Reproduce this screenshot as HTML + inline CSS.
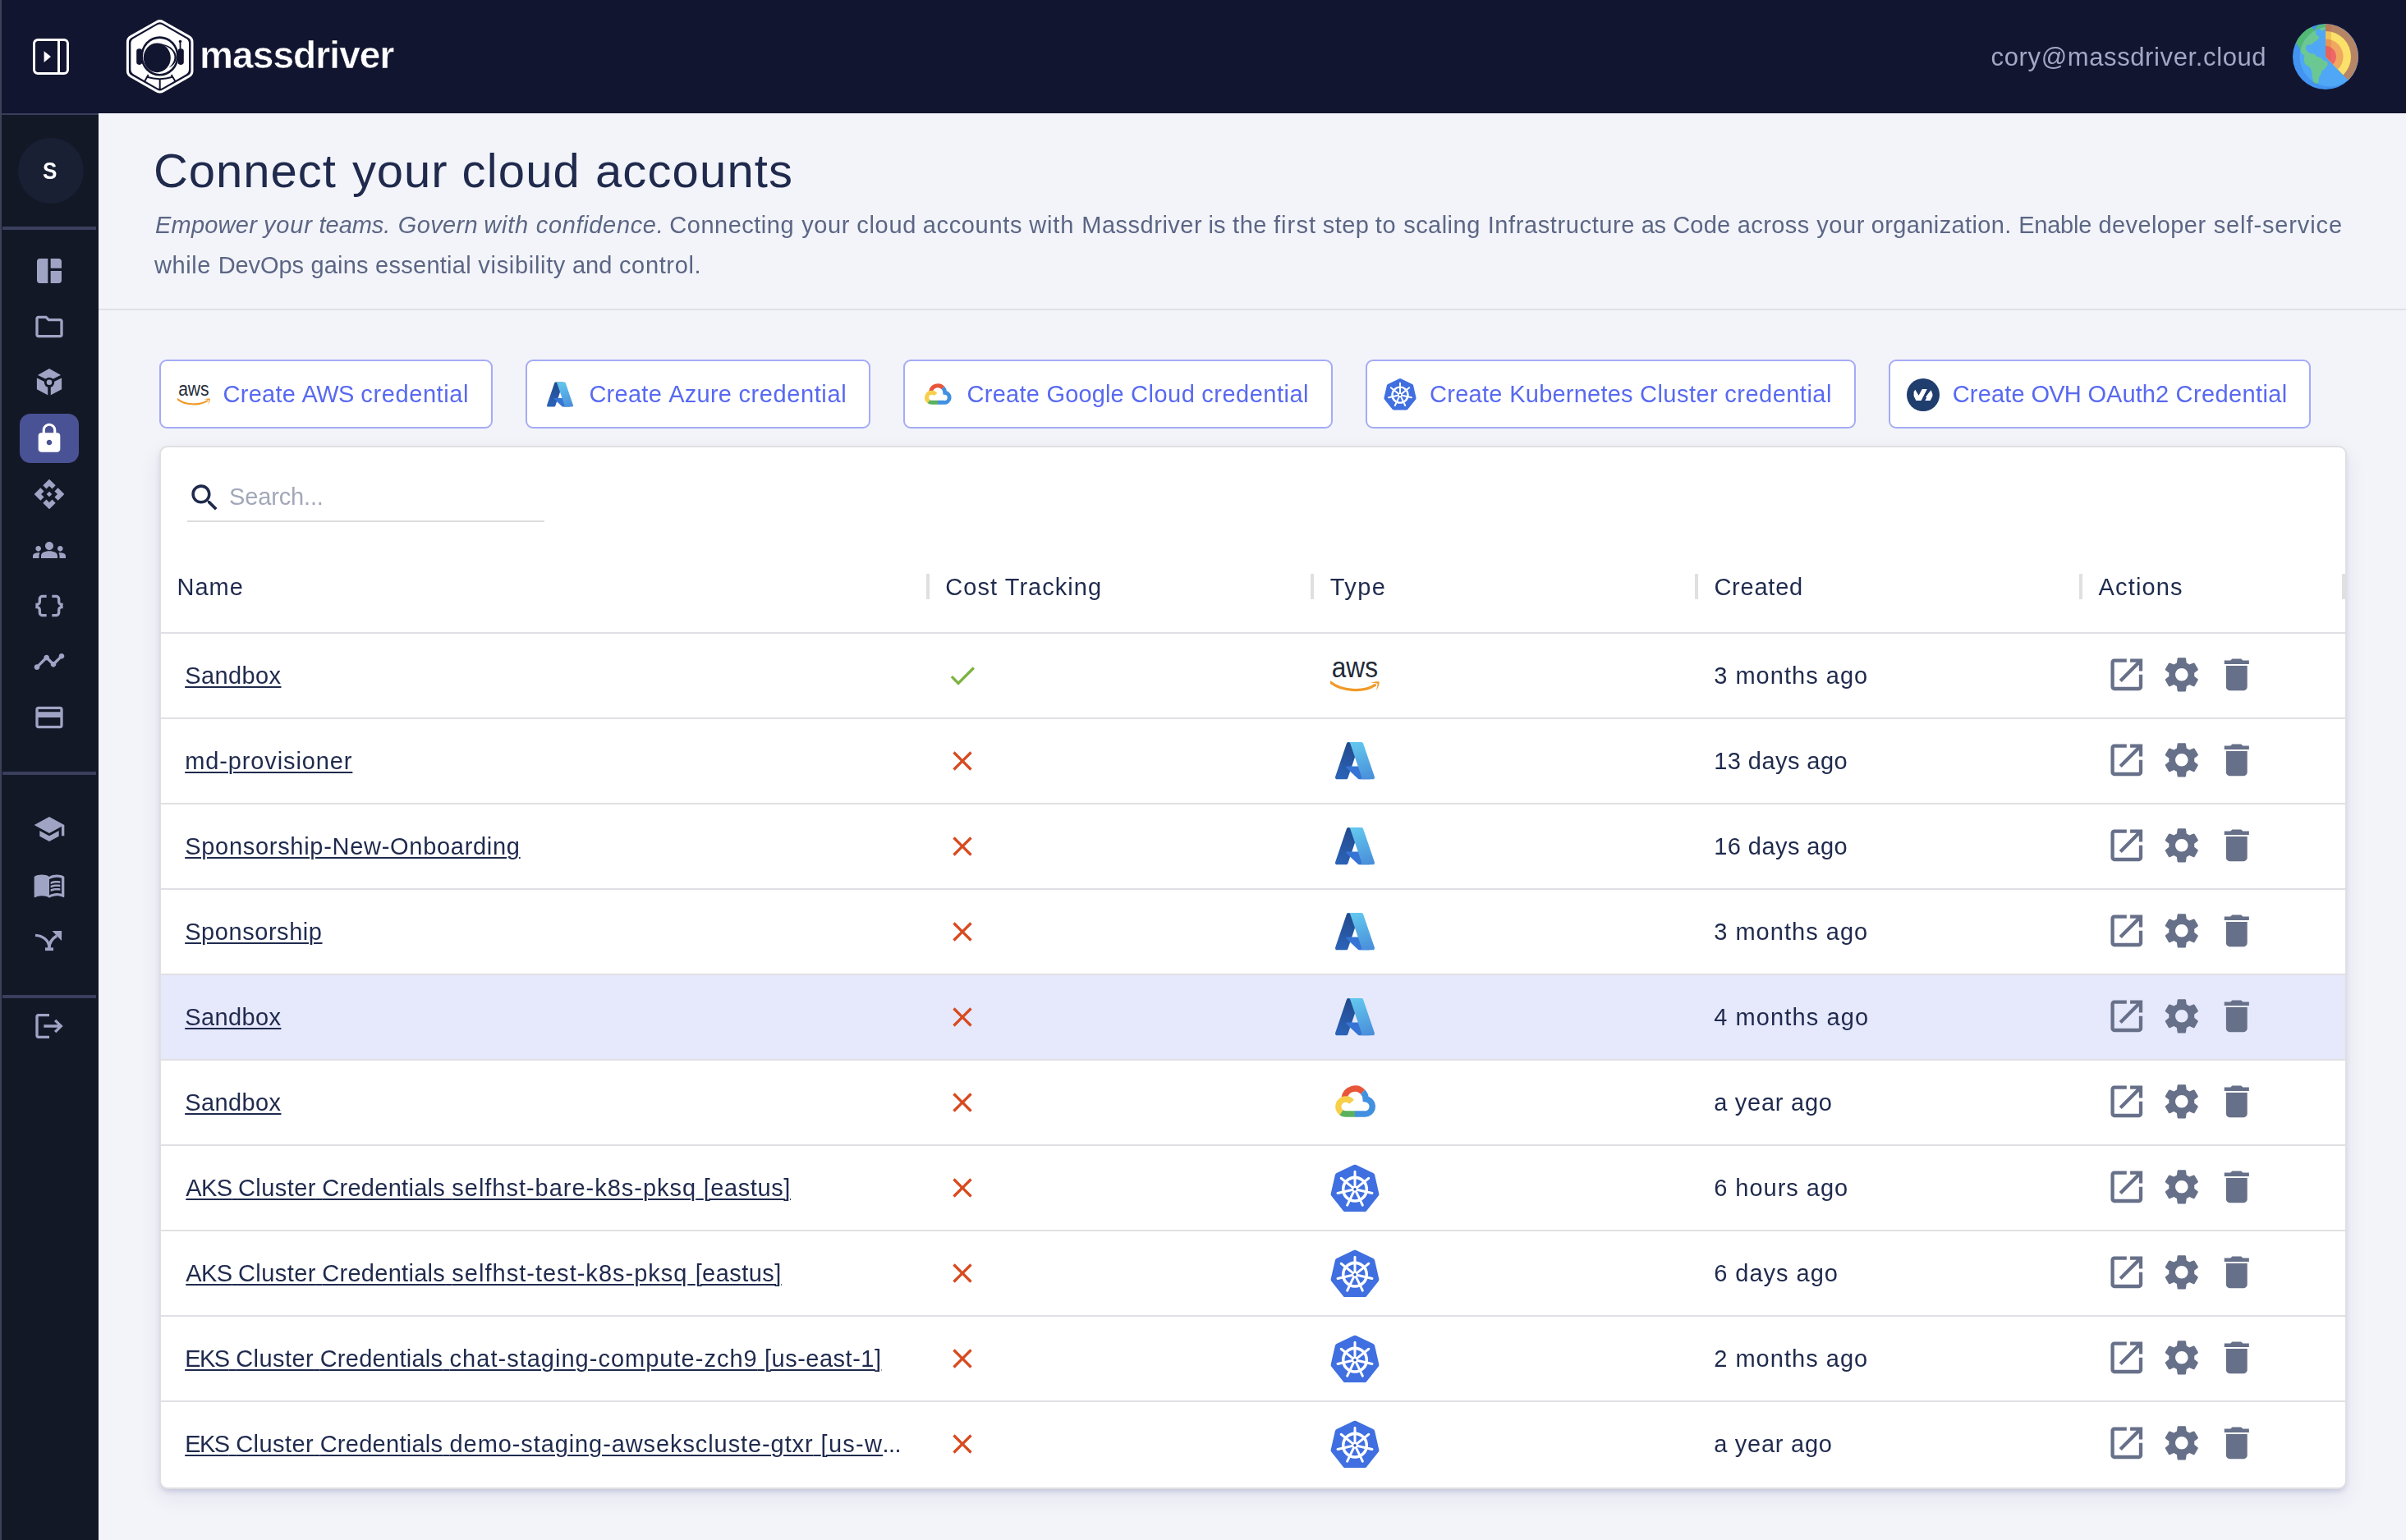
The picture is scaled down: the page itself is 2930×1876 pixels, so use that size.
<!DOCTYPE html>
<html lang="en"><head><meta charset="utf-8"><title>Massdriver - Connect your cloud accounts</title>
<style>
html,body{margin:0;padding:0}
body{width:2930px;height:1876px;position:relative;background:#f3f4f9;font-family:"Liberation Sans",sans-serif}
.a{position:absolute;display:block}
.t{position:absolute;white-space:pre;font-family:"Liberation Sans",sans-serif}
.md{-webkit-text-stroke:.55px #121530}
.sx{transform:scaleX(.9);transform-origin:0 0}
#tx{position:absolute;left:0;top:0;width:2930px;height:1876px;will-change:transform}
#hdr{position:absolute;left:0;top:0;width:2930px;height:138px;background:#121530}
#side{position:absolute;left:0;top:138px;width:120px;height:1738px;background:#131827}
#side .bt{position:absolute;left:0;top:0;width:120px;height:2px;background:#3a3d5c}
#side .dv{position:absolute;left:3px;width:114px;height:4px;background:#3a3f5e}
#strip{position:absolute;left:0;top:0;width:2px;height:1876px;background:#3f4158}
#sep{position:absolute;left:120px;top:376px;width:2810px;height:2px;background:#dfe1e8}
.btn{position:absolute;top:438px;height:84px;box-sizing:border-box;border:2px solid #a5abf6;border-radius:9px;background:#fff}
#card{position:absolute;left:194px;top:543px;width:2664px;height:1271px;box-sizing:border-box;border:2px solid #e0e0e2;background:#fff;border-radius:10px;box-shadow:0 4px 7px -2px rgba(50,60,130,.22),0 10px 26px rgba(50,60,130,.09)}
.row{position:absolute;left:196px;width:2660px;height:102px;border-bottom:2px solid #e0e0e4}
.cs{position:absolute;top:699px;width:4px;height:31px;background:#e0e0e0}
</style></head>
<body>
<div id="card"></div>
<div class="a" style="left:196px;top:770px;width:2660px;height:2px;background:#e0e0e4"></div>
<div class="a" style="left:228px;top:634px;width:435px;height:2px;background:#dcdcde"></div>
<div class="cs" style="left:1128px"></div><div class="cs" style="left:1596px"></div><div class="cs" style="left:2064px"></div><div class="cs" style="left:2532px"></div><div class="cs" style="left:2852px"></div>
<div class='row' style='top:772px;'></div><svg class='a' style='left:1152px;top:802.5px' width='40' height='40' viewBox='0 0 24 24' fill='#7cb342'><path d='M9 16.170L4.830 12l-1.420 1.410L9 19 21 7l-1.410-1.410z'/></svg><svg class='a' style='left:1620px;top:791.5px' width='60' height='60' viewBox='0 0 60 60'><text x='1.700' y='33.300' textLength='56.300' lengthAdjust='spacingAndGlyphs' font-family='Liberation Sans, sans-serif' font-size='35.800' fill='#232b38'>aws</text><g transform='translate(0 4.200)'><path d='M0 34.800C14 46 40 47.500 54.300 38.400' fill='none' stroke='#f09a28' stroke-width='3.300' stroke-linecap='round'/><path d='M49.500 35.600C53 34.300 57.500 33.800 59.600 34.300 60 37 58.500 41.500 56 45.300 57 41.500 57.800 38.500 57.300 36.600 55.500 35.800 52 36 49.500 35.600z' fill='#f09a28'/></g></svg><svg class='a' style='left:2563.8px;top:796.2px' width='51.6' height='51.6' viewBox='0 0 24 24' fill='#677089'><path d='M19 19H5V5h7V3H5c-1.11 0-2 .9-2 2v14c0 1.1.89 2 2 2h14c1.1 0 2-.9 2-2v-7h-2v7zM14 3v2h3.590l-9.830 9.830 1.410 1.410L19 6.410V10h2V3h-7z'/></svg><svg class='a' style='left:2630.9px;top:796.2px' width='51.6' height='51.6' viewBox='0 0 24 24' fill='#677089'><path d='M19.14 12.94c.04-.3.06-.61.06-.94 0-.32-.02-.64-.07-.94l2.030-1.580c.18-.14.23-.41.12-.61l-1.920-3.320c-.12-.22-.37-.29-.59-.22l-2.390.96c-.5-.38-1.030-.7-1.620-.94l-.36-2.540c-.04-.24-.24-.41-.48-.41h-3.840c-.24 0-.43.17-.47.41l-.36 2.540c-.59.24-1.130.57-1.620.94l-2.390-.96c-.22-.08-.47 0-.59.22L2.740 8.870c-.12.21-.08.47.12.61l2.030 1.580c-.05.3-.09.63-.09.94s.02.64.07.94l-2.030 1.580c-.18.14-.23.41-.12.61l1.920 3.320c.12.22.37.29.59.22l2.390-.96c.5.38 1.030.7 1.620.94l.36 2.540c.05.24.24.41.48.41h3.840c.24 0 .44-.17.47-.41l.36-2.540c.59-.24 1.130-.56 1.620-.94l2.390.96c.22.08.47 0 .59-.22l1.920-3.320c.12-.22.07-.47-.12-.61l-2.010-1.580zM12 15.600c-1.980 0-3.600-1.620-3.600-3.600s1.620-3.600 3.600-3.600 3.600 1.620 3.600 3.600-1.620 3.600-3.600 3.600z'/></svg><svg class='a' style='left:2697.9px;top:796.2px' width='51.6' height='51.6' viewBox='0 0 24 24' fill='#677089'><path d='M6 19c0 1.100.9 2 2 2h8c1.100 0 2-.9 2-2V7H6v12zM19 4h-3.500l-1-1h-5l-1 1H5v2h14V4z'/></svg>
<div class='row' style='top:876px;'></div><svg class='a' style='left:1152px;top:906.5px' width='40' height='40' viewBox='0 0 24 24' fill='#d84a1f'><path d='M19 6.410L17.590 5 12 10.590 6.410 5 5 6.410 10.590 12 5 17.590 6.410 19 12 13.410 17.590 19 19 17.590 13.410 12z'/></svg><svg class='a' style='left:1620px;top:895.5px' width='60' height='60' viewBox='-7 -8.300 110 110'><defs><linearGradient id='aza' x1='.5' y1='0' x2='.3' y2='1'><stop offset='0' stop-color='#234a8c'/><stop offset='1' stop-color='#2b63b8'/></linearGradient><linearGradient id='azc' x1='.4' y1='0' x2='.6' y2='1'><stop offset='0' stop-color='#62c6ee'/><stop offset='1' stop-color='#4a90db'/></linearGradient></defs><path d='M33.338 6.544h26.038l-27.030 80.087a4.152 4.152 0 0 1-3.933 2.824H8.149a4.145 4.145 0 0 1-3.928-5.470L29.404 9.368a4.152 4.152 0 0 1 3.934-2.825z' fill='url(#aza)'/><path d='M71.175 60.261h-41.290a1.911 1.911 0 0 0-1.305 3.309l26.532 24.764a4.171 4.171 0 0 0 2.846 1.121h23.380z' fill='#3574d4'/><path d='M66.595 9.364a4.145 4.145 0 0 0-3.928-2.820H33.648a4.146 4.146 0 0 1 3.928 2.820l25.184 74.620a4.146 4.146 0 0 1-3.928 5.472h29.020a4.146 4.146 0 0 0 3.927-5.472z' fill='url(#azc)'/></svg><svg class='a' style='left:2563.8px;top:900.2px' width='51.6' height='51.6' viewBox='0 0 24 24' fill='#677089'><path d='M19 19H5V5h7V3H5c-1.11 0-2 .9-2 2v14c0 1.1.89 2 2 2h14c1.1 0 2-.9 2-2v-7h-2v7zM14 3v2h3.590l-9.830 9.830 1.410 1.410L19 6.410V10h2V3h-7z'/></svg><svg class='a' style='left:2630.9px;top:900.2px' width='51.6' height='51.6' viewBox='0 0 24 24' fill='#677089'><path d='M19.14 12.94c.04-.3.06-.61.06-.94 0-.32-.02-.64-.07-.94l2.030-1.580c.18-.14.23-.41.12-.61l-1.920-3.320c-.12-.22-.37-.29-.59-.22l-2.390.96c-.5-.38-1.030-.7-1.620-.94l-.36-2.540c-.04-.24-.24-.41-.48-.41h-3.840c-.24 0-.43.17-.47.41l-.36 2.540c-.59.24-1.130.57-1.620.94l-2.390-.96c-.22-.08-.47 0-.59.22L2.740 8.870c-.12.21-.08.47.12.61l2.030 1.580c-.05.3-.09.63-.09.94s.02.64.07.94l-2.030 1.580c-.18.14-.23.41-.12.61l1.920 3.320c.12.22.37.29.59.22l2.390-.96c.5.38 1.030.7 1.620.94l.36 2.540c.05.24.24.41.48.41h3.840c.24 0 .44-.17.47-.41l.36-2.540c.59-.24 1.130-.56 1.620-.94l2.390.96c.22.08.47 0 .59-.22l1.920-3.320c.12-.22.07-.47-.12-.61l-2.010-1.580zM12 15.600c-1.980 0-3.600-1.620-3.600-3.600s1.620-3.600 3.600-3.600 3.600 1.620 3.600 3.600-1.620 3.600-3.600 3.600z'/></svg><svg class='a' style='left:2697.9px;top:900.2px' width='51.6' height='51.6' viewBox='0 0 24 24' fill='#677089'><path d='M6 19c0 1.100.9 2 2 2h8c1.100 0 2-.9 2-2V7H6v12zM19 4h-3.500l-1-1h-5l-1 1H5v2h14V4z'/></svg>
<div class='row' style='top:980px;'></div><svg class='a' style='left:1152px;top:1010.5px' width='40' height='40' viewBox='0 0 24 24' fill='#d84a1f'><path d='M19 6.410L17.590 5 12 10.590 6.410 5 5 6.410 10.590 12 5 17.590 6.410 19 12 13.410 17.590 19 19 17.590 13.410 12z'/></svg><svg class='a' style='left:1620px;top:999.5px' width='60' height='60' viewBox='-7 -8.300 110 110'><defs><linearGradient id='aza' x1='.5' y1='0' x2='.3' y2='1'><stop offset='0' stop-color='#234a8c'/><stop offset='1' stop-color='#2b63b8'/></linearGradient><linearGradient id='azc' x1='.4' y1='0' x2='.6' y2='1'><stop offset='0' stop-color='#62c6ee'/><stop offset='1' stop-color='#4a90db'/></linearGradient></defs><path d='M33.338 6.544h26.038l-27.030 80.087a4.152 4.152 0 0 1-3.933 2.824H8.149a4.145 4.145 0 0 1-3.928-5.470L29.404 9.368a4.152 4.152 0 0 1 3.934-2.825z' fill='url(#aza)'/><path d='M71.175 60.261h-41.290a1.911 1.911 0 0 0-1.305 3.309l26.532 24.764a4.171 4.171 0 0 0 2.846 1.121h23.380z' fill='#3574d4'/><path d='M66.595 9.364a4.145 4.145 0 0 0-3.928-2.820H33.648a4.146 4.146 0 0 1 3.928 2.820l25.184 74.620a4.146 4.146 0 0 1-3.928 5.472h29.020a4.146 4.146 0 0 0 3.927-5.472z' fill='url(#azc)'/></svg><svg class='a' style='left:2563.8px;top:1004.2px' width='51.6' height='51.6' viewBox='0 0 24 24' fill='#677089'><path d='M19 19H5V5h7V3H5c-1.11 0-2 .9-2 2v14c0 1.1.89 2 2 2h14c1.1 0 2-.9 2-2v-7h-2v7zM14 3v2h3.590l-9.830 9.830 1.410 1.410L19 6.410V10h2V3h-7z'/></svg><svg class='a' style='left:2630.9px;top:1004.2px' width='51.6' height='51.6' viewBox='0 0 24 24' fill='#677089'><path d='M19.14 12.94c.04-.3.06-.61.06-.94 0-.32-.02-.64-.07-.94l2.030-1.580c.18-.14.23-.41.12-.61l-1.920-3.320c-.12-.22-.37-.29-.59-.22l-2.390.96c-.5-.38-1.030-.7-1.620-.94l-.36-2.540c-.04-.24-.24-.41-.48-.41h-3.840c-.24 0-.43.17-.47.41l-.36 2.540c-.59.24-1.130.57-1.620.94l-2.390-.96c-.22-.08-.47 0-.59.22L2.740 8.870c-.12.21-.08.47.12.61l2.030 1.580c-.05.3-.09.63-.09.94s.02.64.07.94l-2.030 1.580c-.18.14-.23.41-.12.61l1.920 3.320c.12.22.37.29.59.22l2.390-.96c.5.38 1.030.7 1.620.94l.36 2.540c.05.24.24.41.48.41h3.840c.24 0 .44-.17.47-.41l.36-2.540c.59-.24 1.130-.56 1.620-.94l2.390.96c.22.08.47 0 .59-.22l1.920-3.320c.12-.22.07-.47-.12-.61l-2.010-1.580zM12 15.600c-1.980 0-3.600-1.620-3.600-3.600s1.620-3.600 3.600-3.600 3.600 1.620 3.600 3.600-1.620 3.600-3.600 3.600z'/></svg><svg class='a' style='left:2697.9px;top:1004.2px' width='51.6' height='51.6' viewBox='0 0 24 24' fill='#677089'><path d='M6 19c0 1.100.9 2 2 2h8c1.100 0 2-.9 2-2V7H6v12zM19 4h-3.500l-1-1h-5l-1 1H5v2h14V4z'/></svg>
<div class='row' style='top:1084px;'></div><svg class='a' style='left:1152px;top:1114.5px' width='40' height='40' viewBox='0 0 24 24' fill='#d84a1f'><path d='M19 6.410L17.590 5 12 10.590 6.410 5 5 6.410 10.590 12 5 17.590 6.410 19 12 13.410 17.590 19 19 17.590 13.410 12z'/></svg><svg class='a' style='left:1620px;top:1103.5px' width='60' height='60' viewBox='-7 -8.300 110 110'><defs><linearGradient id='aza' x1='.5' y1='0' x2='.3' y2='1'><stop offset='0' stop-color='#234a8c'/><stop offset='1' stop-color='#2b63b8'/></linearGradient><linearGradient id='azc' x1='.4' y1='0' x2='.6' y2='1'><stop offset='0' stop-color='#62c6ee'/><stop offset='1' stop-color='#4a90db'/></linearGradient></defs><path d='M33.338 6.544h26.038l-27.030 80.087a4.152 4.152 0 0 1-3.933 2.824H8.149a4.145 4.145 0 0 1-3.928-5.470L29.404 9.368a4.152 4.152 0 0 1 3.934-2.825z' fill='url(#aza)'/><path d='M71.175 60.261h-41.290a1.911 1.911 0 0 0-1.305 3.309l26.532 24.764a4.171 4.171 0 0 0 2.846 1.121h23.380z' fill='#3574d4'/><path d='M66.595 9.364a4.145 4.145 0 0 0-3.928-2.820H33.648a4.146 4.146 0 0 1 3.928 2.820l25.184 74.620a4.146 4.146 0 0 1-3.928 5.472h29.020a4.146 4.146 0 0 0 3.927-5.472z' fill='url(#azc)'/></svg><svg class='a' style='left:2563.8px;top:1108.2px' width='51.6' height='51.6' viewBox='0 0 24 24' fill='#677089'><path d='M19 19H5V5h7V3H5c-1.11 0-2 .9-2 2v14c0 1.1.89 2 2 2h14c1.1 0 2-.9 2-2v-7h-2v7zM14 3v2h3.590l-9.830 9.830 1.410 1.410L19 6.410V10h2V3h-7z'/></svg><svg class='a' style='left:2630.9px;top:1108.2px' width='51.6' height='51.6' viewBox='0 0 24 24' fill='#677089'><path d='M19.14 12.94c.04-.3.06-.61.06-.94 0-.32-.02-.64-.07-.94l2.030-1.580c.18-.14.23-.41.12-.61l-1.920-3.320c-.12-.22-.37-.29-.59-.22l-2.390.96c-.5-.38-1.030-.7-1.620-.94l-.36-2.540c-.04-.24-.24-.41-.48-.41h-3.840c-.24 0-.43.17-.47.41l-.36 2.540c-.59.24-1.130.57-1.620.94l-2.390-.96c-.22-.08-.47 0-.59.22L2.740 8.870c-.12.21-.08.47.12.61l2.030 1.580c-.05.3-.09.63-.09.94s.02.64.07.94l-2.030 1.580c-.18.14-.23.41-.12.61l1.920 3.320c.12.22.37.29.59.22l2.390-.96c.5.38 1.030.7 1.620.94l.36 2.540c.05.24.24.41.48.41h3.840c.24 0 .44-.17.47-.41l.36-2.540c.59-.24 1.130-.56 1.620-.94l2.390.96c.22.08.47 0 .59-.22l1.920-3.320c.12-.22.07-.47-.12-.61l-2.010-1.580zM12 15.600c-1.980 0-3.600-1.620-3.600-3.600s1.620-3.600 3.600-3.600 3.600 1.620 3.600 3.600-1.620 3.600-3.600 3.600z'/></svg><svg class='a' style='left:2697.9px;top:1108.2px' width='51.6' height='51.6' viewBox='0 0 24 24' fill='#677089'><path d='M6 19c0 1.100.9 2 2 2h8c1.100 0 2-.9 2-2V7H6v12zM19 4h-3.500l-1-1h-5l-1 1H5v2h14V4z'/></svg>
<div class='row' style='top:1188px;background:#e6e8fc;'></div><svg class='a' style='left:1152px;top:1218.5px' width='40' height='40' viewBox='0 0 24 24' fill='#d84a1f'><path d='M19 6.410L17.590 5 12 10.590 6.410 5 5 6.410 10.590 12 5 17.590 6.410 19 12 13.410 17.590 19 19 17.590 13.410 12z'/></svg><svg class='a' style='left:1620px;top:1207.5px' width='60' height='60' viewBox='-7 -8.300 110 110'><defs><linearGradient id='aza' x1='.5' y1='0' x2='.3' y2='1'><stop offset='0' stop-color='#234a8c'/><stop offset='1' stop-color='#2b63b8'/></linearGradient><linearGradient id='azc' x1='.4' y1='0' x2='.6' y2='1'><stop offset='0' stop-color='#62c6ee'/><stop offset='1' stop-color='#4a90db'/></linearGradient></defs><path d='M33.338 6.544h26.038l-27.030 80.087a4.152 4.152 0 0 1-3.933 2.824H8.149a4.145 4.145 0 0 1-3.928-5.470L29.404 9.368a4.152 4.152 0 0 1 3.934-2.825z' fill='url(#aza)'/><path d='M71.175 60.261h-41.290a1.911 1.911 0 0 0-1.305 3.309l26.532 24.764a4.171 4.171 0 0 0 2.846 1.121h23.380z' fill='#3574d4'/><path d='M66.595 9.364a4.145 4.145 0 0 0-3.928-2.820H33.648a4.146 4.146 0 0 1 3.928 2.820l25.184 74.620a4.146 4.146 0 0 1-3.928 5.472h29.020a4.146 4.146 0 0 0 3.927-5.472z' fill='url(#azc)'/></svg><svg class='a' style='left:2563.8px;top:1212.2px' width='51.6' height='51.6' viewBox='0 0 24 24' fill='#677089'><path d='M19 19H5V5h7V3H5c-1.11 0-2 .9-2 2v14c0 1.1.89 2 2 2h14c1.1 0 2-.9 2-2v-7h-2v7zM14 3v2h3.590l-9.830 9.830 1.410 1.410L19 6.410V10h2V3h-7z'/></svg><svg class='a' style='left:2630.9px;top:1212.2px' width='51.6' height='51.6' viewBox='0 0 24 24' fill='#677089'><path d='M19.14 12.94c.04-.3.06-.61.06-.94 0-.32-.02-.64-.07-.94l2.030-1.580c.18-.14.23-.41.12-.61l-1.920-3.320c-.12-.22-.37-.29-.59-.22l-2.390.96c-.5-.38-1.030-.7-1.620-.94l-.36-2.540c-.04-.24-.24-.41-.48-.41h-3.840c-.24 0-.43.17-.47.41l-.36 2.540c-.59.24-1.130.57-1.620.94l-2.390-.96c-.22-.08-.47 0-.59.22L2.740 8.870c-.12.21-.08.47.12.61l2.030 1.580c-.05.3-.09.63-.09.94s.02.64.07.94l-2.030 1.580c-.18.14-.23.41-.12.61l1.920 3.320c.12.22.37.29.59.22l2.390-.96c.5.38 1.030.7 1.620.94l.36 2.540c.05.24.24.41.48.41h3.840c.24 0 .44-.17.47-.41l.36-2.540c.59-.24 1.130-.56 1.620-.94l2.390.96c.22.08.47 0 .59-.22l1.920-3.320c.12-.22.07-.47-.12-.61l-2.010-1.580zM12 15.600c-1.980 0-3.600-1.620-3.600-3.600s1.620-3.600 3.600-3.600 3.600 1.620 3.600 3.600-1.620 3.600-3.600 3.600z'/></svg><svg class='a' style='left:2697.9px;top:1212.2px' width='51.6' height='51.6' viewBox='0 0 24 24' fill='#677089'><path d='M6 19c0 1.100.9 2 2 2h8c1.100 0 2-.9 2-2V7H6v12zM19 4h-3.500l-1-1h-5l-1 1H5v2h14V4z'/></svg>
<div class='row' style='top:1292px;'></div><svg class='a' style='left:1152px;top:1322.5px' width='40' height='40' viewBox='0 0 24 24' fill='#d84a1f'><path d='M19 6.410L17.590 5 12 10.590 6.410 5 5 6.410 10.590 12 5 17.590 6.410 19 12 13.410 17.590 19 19 17.590 13.410 12z'/></svg><svg class='a' style='left:1620px;top:1312.5px' width='60' height='60' viewBox='0 1.500 60 60' fill='none' stroke-width='7.400'><path d='M17.200 25.600A13.200 13.200 0 0 1 39.600 18.600' stroke='#e8563a'/><path d='M39.600 18.600A13.200 13.200 0 0 1 43.200 27.300 9 9 0 0 1 41 45.500H30' stroke='#4290e0'/><path d='M30 45.500H19A9 9 0 0 1 13 43.200' stroke='#5bb15d'/><path d='M13.600 43.800A9 9 0 0 1 19 27.500 9 9 0 0 1 26 30.800' stroke='#f7cf4a'/></svg><svg class='a' style='left:2563.8px;top:1316.2px' width='51.6' height='51.6' viewBox='0 0 24 24' fill='#677089'><path d='M19 19H5V5h7V3H5c-1.11 0-2 .9-2 2v14c0 1.1.89 2 2 2h14c1.1 0 2-.9 2-2v-7h-2v7zM14 3v2h3.590l-9.830 9.830 1.410 1.410L19 6.410V10h2V3h-7z'/></svg><svg class='a' style='left:2630.9px;top:1316.2px' width='51.6' height='51.6' viewBox='0 0 24 24' fill='#677089'><path d='M19.14 12.94c.04-.3.06-.61.06-.94 0-.32-.02-.64-.07-.94l2.030-1.580c.18-.14.23-.41.12-.61l-1.920-3.320c-.12-.22-.37-.29-.59-.22l-2.390.96c-.5-.38-1.030-.7-1.620-.94l-.36-2.540c-.04-.24-.24-.41-.48-.41h-3.840c-.24 0-.43.17-.47.41l-.36 2.540c-.59.24-1.130.57-1.620.94l-2.390-.96c-.22-.08-.47 0-.59.22L2.740 8.870c-.12.21-.08.47.12.61l2.030 1.580c-.05.3-.09.63-.09.94s.02.64.07.94l-2.030 1.580c-.18.14-.23.41-.12.61l1.920 3.320c.12.22.37.29.59.22l2.390-.96c.5.38 1.030.7 1.620.94l.36 2.540c.05.24.24.41.48.41h3.840c.24 0 .44-.17.47-.41l.36-2.540c.59-.24 1.130-.56 1.620-.94l2.390.96c.22.08.47 0 .59-.22l1.920-3.320c.12-.22.07-.47-.12-.61l-2.010-1.580zM12 15.600c-1.980 0-3.600-1.620-3.600-3.600s1.620-3.600 3.600-3.600 3.600 1.620 3.600 3.600-1.620 3.600-3.600 3.600z'/></svg><svg class='a' style='left:2697.9px;top:1316.2px' width='51.6' height='51.6' viewBox='0 0 24 24' fill='#677089'><path d='M6 19c0 1.100.9 2 2 2h8c1.100 0 2-.9 2-2V7H6v12zM19 4h-3.500l-1-1h-5l-1 1H5v2h14V4z'/></svg>
<div class='row' style='top:1396px;'></div><svg class='a' style='left:1152px;top:1426.5px' width='40' height='40' viewBox='0 0 24 24' fill='#d84a1f'><path d='M19 6.410L17.590 5 12 10.590 6.410 5 5 6.410 10.590 12 5 17.590 6.410 19 12 13.410 17.590 19 19 17.590 13.410 12z'/></svg><svg class='a' style='left:1620px;top:1416.5px' width='60' height='60' viewBox='0 0 60 60'><path d='M30.00 4.90 50.95 14.99 56.13 37.66 41.63 55.85 18.37 55.85 3.87 37.66 9.05 14.99z' fill='#3f6fe0' stroke='#3f6fe0' stroke-width='6.500' stroke-linejoin='round'/><circle cx='30' cy='31.7' r='14.300' fill='none' stroke='#fff' stroke-width='3.600'/><path d='M30.00 29.20L30.00 10.20M31.95 30.14L46.81 18.29M32.44 32.26L50.96 36.48M31.08 33.95L39.33 51.07M28.92 33.95L20.67 51.07M27.56 32.26L9.04 36.48M28.05 30.14L13.19 18.29' stroke='#fff' stroke-width='3' stroke-linecap='round'/><circle cx='30' cy='31.7' r='3.600' fill='#fff'/><circle cx='30' cy='31.7' r='1.700' fill='#2f55b8'/></svg><svg class='a' style='left:2563.8px;top:1420.2px' width='51.6' height='51.6' viewBox='0 0 24 24' fill='#677089'><path d='M19 19H5V5h7V3H5c-1.11 0-2 .9-2 2v14c0 1.1.89 2 2 2h14c1.1 0 2-.9 2-2v-7h-2v7zM14 3v2h3.590l-9.830 9.830 1.410 1.410L19 6.410V10h2V3h-7z'/></svg><svg class='a' style='left:2630.9px;top:1420.2px' width='51.6' height='51.6' viewBox='0 0 24 24' fill='#677089'><path d='M19.14 12.94c.04-.3.06-.61.06-.94 0-.32-.02-.64-.07-.94l2.030-1.580c.18-.14.23-.41.12-.61l-1.920-3.320c-.12-.22-.37-.29-.59-.22l-2.390.96c-.5-.38-1.030-.7-1.620-.94l-.36-2.540c-.04-.24-.24-.41-.48-.41h-3.840c-.24 0-.43.17-.47.41l-.36 2.540c-.59.24-1.130.57-1.620.94l-2.390-.96c-.22-.08-.47 0-.59.22L2.740 8.870c-.12.21-.08.47.12.61l2.030 1.580c-.05.3-.09.63-.09.94s.02.64.07.94l-2.030 1.580c-.18.14-.23.41-.12.61l1.920 3.320c.12.22.37.29.59.22l2.390-.96c.5.38 1.030.7 1.620.94l.36 2.540c.05.24.24.41.48.41h3.840c.24 0 .44-.17.47-.41l.36-2.540c.59-.24 1.130-.56 1.620-.94l2.390.96c.22.08.47 0 .59-.22l1.920-3.320c.12-.22.07-.47-.12-.61l-2.010-1.580zM12 15.600c-1.980 0-3.600-1.620-3.600-3.600s1.620-3.600 3.600-3.600 3.600 1.620 3.600 3.600-1.620 3.600-3.600 3.600z'/></svg><svg class='a' style='left:2697.9px;top:1420.2px' width='51.6' height='51.6' viewBox='0 0 24 24' fill='#677089'><path d='M6 19c0 1.100.9 2 2 2h8c1.100 0 2-.9 2-2V7H6v12zM19 4h-3.500l-1-1h-5l-1 1H5v2h14V4z'/></svg>
<div class='row' style='top:1500px;'></div><svg class='a' style='left:1152px;top:1530.5px' width='40' height='40' viewBox='0 0 24 24' fill='#d84a1f'><path d='M19 6.410L17.590 5 12 10.590 6.410 5 5 6.410 10.590 12 5 17.590 6.410 19 12 13.410 17.590 19 19 17.590 13.410 12z'/></svg><svg class='a' style='left:1620px;top:1520.5px' width='60' height='60' viewBox='0 0 60 60'><path d='M30.00 4.90 50.95 14.99 56.13 37.66 41.63 55.85 18.37 55.85 3.87 37.66 9.05 14.99z' fill='#3f6fe0' stroke='#3f6fe0' stroke-width='6.500' stroke-linejoin='round'/><circle cx='30' cy='31.7' r='14.300' fill='none' stroke='#fff' stroke-width='3.600'/><path d='M30.00 29.20L30.00 10.20M31.95 30.14L46.81 18.29M32.44 32.26L50.96 36.48M31.08 33.95L39.33 51.07M28.92 33.95L20.67 51.07M27.56 32.26L9.04 36.48M28.05 30.14L13.19 18.29' stroke='#fff' stroke-width='3' stroke-linecap='round'/><circle cx='30' cy='31.7' r='3.600' fill='#fff'/><circle cx='30' cy='31.7' r='1.700' fill='#2f55b8'/></svg><svg class='a' style='left:2563.8px;top:1524.2px' width='51.6' height='51.6' viewBox='0 0 24 24' fill='#677089'><path d='M19 19H5V5h7V3H5c-1.11 0-2 .9-2 2v14c0 1.1.89 2 2 2h14c1.1 0 2-.9 2-2v-7h-2v7zM14 3v2h3.590l-9.830 9.830 1.410 1.410L19 6.410V10h2V3h-7z'/></svg><svg class='a' style='left:2630.9px;top:1524.2px' width='51.6' height='51.6' viewBox='0 0 24 24' fill='#677089'><path d='M19.14 12.94c.04-.3.06-.61.06-.94 0-.32-.02-.64-.07-.94l2.030-1.580c.18-.14.23-.41.12-.61l-1.920-3.320c-.12-.22-.37-.29-.59-.22l-2.390.96c-.5-.38-1.030-.7-1.620-.94l-.36-2.540c-.04-.24-.24-.41-.48-.41h-3.840c-.24 0-.43.17-.47.41l-.36 2.540c-.59.24-1.130.57-1.620.94l-2.390-.96c-.22-.08-.47 0-.59.22L2.740 8.870c-.12.21-.08.47.12.61l2.030 1.580c-.05.3-.09.63-.09.94s.02.64.07.94l-2.030 1.580c-.18.14-.23.41-.12.61l1.920 3.320c.12.22.37.29.59.22l2.390-.96c.5.38 1.030.7 1.620.94l.36 2.540c.05.24.24.41.48.41h3.840c.24 0 .44-.17.47-.41l.36-2.540c.59-.24 1.130-.56 1.620-.94l2.390.96c.22.08.47 0 .59-.22l1.920-3.320c.12-.22.07-.47-.12-.61l-2.010-1.580zM12 15.600c-1.980 0-3.600-1.620-3.600-3.600s1.620-3.600 3.600-3.600 3.600 1.620 3.600 3.600-1.620 3.600-3.600 3.600z'/></svg><svg class='a' style='left:2697.9px;top:1524.2px' width='51.6' height='51.6' viewBox='0 0 24 24' fill='#677089'><path d='M6 19c0 1.100.9 2 2 2h8c1.100 0 2-.9 2-2V7H6v12zM19 4h-3.500l-1-1h-5l-1 1H5v2h14V4z'/></svg>
<div class='row' style='top:1604px;'></div><svg class='a' style='left:1152px;top:1634.5px' width='40' height='40' viewBox='0 0 24 24' fill='#d84a1f'><path d='M19 6.410L17.590 5 12 10.590 6.410 5 5 6.410 10.590 12 5 17.590 6.410 19 12 13.410 17.590 19 19 17.590 13.410 12z'/></svg><svg class='a' style='left:1620px;top:1624.5px' width='60' height='60' viewBox='0 0 60 60'><path d='M30.00 4.90 50.95 14.99 56.13 37.66 41.63 55.85 18.37 55.85 3.87 37.66 9.05 14.99z' fill='#3f6fe0' stroke='#3f6fe0' stroke-width='6.500' stroke-linejoin='round'/><circle cx='30' cy='31.7' r='14.300' fill='none' stroke='#fff' stroke-width='3.600'/><path d='M30.00 29.20L30.00 10.20M31.95 30.14L46.81 18.29M32.44 32.26L50.96 36.48M31.08 33.95L39.33 51.07M28.92 33.95L20.67 51.07M27.56 32.26L9.04 36.48M28.05 30.14L13.19 18.29' stroke='#fff' stroke-width='3' stroke-linecap='round'/><circle cx='30' cy='31.7' r='3.600' fill='#fff'/><circle cx='30' cy='31.7' r='1.700' fill='#2f55b8'/></svg><svg class='a' style='left:2563.8px;top:1628.2px' width='51.6' height='51.6' viewBox='0 0 24 24' fill='#677089'><path d='M19 19H5V5h7V3H5c-1.11 0-2 .9-2 2v14c0 1.1.89 2 2 2h14c1.1 0 2-.9 2-2v-7h-2v7zM14 3v2h3.590l-9.830 9.830 1.410 1.410L19 6.410V10h2V3h-7z'/></svg><svg class='a' style='left:2630.9px;top:1628.2px' width='51.6' height='51.6' viewBox='0 0 24 24' fill='#677089'><path d='M19.14 12.94c.04-.3.06-.61.06-.94 0-.32-.02-.64-.07-.94l2.030-1.580c.18-.14.23-.41.12-.61l-1.920-3.320c-.12-.22-.37-.29-.59-.22l-2.390.96c-.5-.38-1.030-.7-1.620-.94l-.36-2.540c-.04-.24-.24-.41-.48-.41h-3.840c-.24 0-.43.17-.47.41l-.36 2.540c-.59.24-1.130.57-1.620.94l-2.390-.96c-.22-.08-.47 0-.59.22L2.740 8.870c-.12.21-.08.47.12.61l2.030 1.580c-.05.3-.09.63-.09.94s.02.64.07.94l-2.030 1.580c-.18.14-.23.41-.12.61l1.920 3.320c.12.22.37.29.59.22l2.390-.96c.5.38 1.030.7 1.620.94l.36 2.540c.05.24.24.41.48.41h3.840c.24 0 .44-.17.47-.41l.36-2.540c.59-.24 1.130-.56 1.620-.94l2.390.96c.22.08.47 0 .59-.22l1.920-3.320c.12-.22.07-.47-.12-.61l-2.010-1.580zM12 15.600c-1.980 0-3.600-1.620-3.600-3.600s1.620-3.600 3.600-3.600 3.600 1.620 3.600 3.600-1.620 3.600-3.600 3.600z'/></svg><svg class='a' style='left:2697.9px;top:1628.2px' width='51.6' height='51.6' viewBox='0 0 24 24' fill='#677089'><path d='M6 19c0 1.100.9 2 2 2h8c1.100 0 2-.9 2-2V7H6v12zM19 4h-3.500l-1-1h-5l-1 1H5v2h14V4z'/></svg>
<div class='row' style='top:1708px;border-bottom:none;'></div><svg class='a' style='left:1152px;top:1738.5px' width='40' height='40' viewBox='0 0 24 24' fill='#d84a1f'><path d='M19 6.410L17.590 5 12 10.590 6.410 5 5 6.410 10.590 12 5 17.590 6.410 19 12 13.410 17.590 19 19 17.590 13.410 12z'/></svg><svg class='a' style='left:1620px;top:1728.5px' width='60' height='60' viewBox='0 0 60 60'><path d='M30.00 4.90 50.95 14.99 56.13 37.66 41.63 55.85 18.37 55.85 3.87 37.66 9.05 14.99z' fill='#3f6fe0' stroke='#3f6fe0' stroke-width='6.500' stroke-linejoin='round'/><circle cx='30' cy='31.7' r='14.300' fill='none' stroke='#fff' stroke-width='3.600'/><path d='M30.00 29.20L30.00 10.20M31.95 30.14L46.81 18.29M32.44 32.26L50.96 36.48M31.08 33.95L39.33 51.07M28.92 33.95L20.67 51.07M27.56 32.26L9.04 36.48M28.05 30.14L13.19 18.29' stroke='#fff' stroke-width='3' stroke-linecap='round'/><circle cx='30' cy='31.7' r='3.600' fill='#fff'/><circle cx='30' cy='31.7' r='1.700' fill='#2f55b8'/></svg><svg class='a' style='left:2563.8px;top:1732.2px' width='51.6' height='51.6' viewBox='0 0 24 24' fill='#677089'><path d='M19 19H5V5h7V3H5c-1.11 0-2 .9-2 2v14c0 1.1.89 2 2 2h14c1.1 0 2-.9 2-2v-7h-2v7zM14 3v2h3.590l-9.830 9.830 1.410 1.410L19 6.410V10h2V3h-7z'/></svg><svg class='a' style='left:2630.9px;top:1732.2px' width='51.6' height='51.6' viewBox='0 0 24 24' fill='#677089'><path d='M19.14 12.94c.04-.3.06-.61.06-.94 0-.32-.02-.64-.07-.94l2.030-1.580c.18-.14.23-.41.12-.61l-1.920-3.320c-.12-.22-.37-.29-.59-.22l-2.390.96c-.5-.38-1.030-.7-1.620-.94l-.36-2.540c-.04-.24-.24-.41-.48-.41h-3.840c-.24 0-.43.17-.47.41l-.36 2.540c-.59.24-1.130.57-1.620.94l-2.390-.96c-.22-.08-.47 0-.59.22L2.740 8.870c-.12.21-.08.47.12.61l2.030 1.580c-.05.3-.09.63-.09.94s.02.64.07.94l-2.030 1.580c-.18.14-.23.41-.12.61l1.920 3.320c.12.22.37.29.59.22l2.390-.96c.5.38 1.030.7 1.620.94l.36 2.540c.05.24.24.41.48.41h3.840c.24 0 .44-.17.47-.41l.36-2.540c.59-.24 1.130-.56 1.620-.94l2.390.96c.22.08.47 0 .59-.22l1.920-3.320c.12-.22.07-.47-.12-.61l-2.010-1.580zM12 15.600c-1.980 0-3.600-1.620-3.600-3.600s1.620-3.600 3.600-3.600 3.600 1.620 3.600 3.600-1.620 3.600-3.600 3.600z'/></svg><svg class='a' style='left:2697.9px;top:1732.2px' width='51.6' height='51.6' viewBox='0 0 24 24' fill='#677089'><path d='M6 19c0 1.100.9 2 2 2h8c1.100 0 2-.9 2-2V7H6v12zM19 4h-3.500l-1-1h-5l-1 1H5v2h14V4z'/></svg>

<svg class="a" style="left:227.700px;top:584.600px" width="42.800" height="42.800" viewBox="0 0 24 24" fill="#1f2a4d"><path d="M15.500 14h-.790l-.280-.270C15.410 12.590 16 11.110 16 9.500 16 5.910 13.090 3 9.500 3S3 5.910 3 9.500 5.910 16 9.500 16c1.610 0 3.090-.590 4.230-1.570l.270.280v.790l5 4.990L20.490 19l-4.990-5zm-6 0C7.010 14 5 11.990 5 9.500S7.010 5 9.500 5 14 7.010 14 9.500 11.990 14 9.500 14z"/></svg>
<div id="sep"></div>
<div class='btn' style='left:194px;width:406px'></div><svg class='a' style='left:216px;top:460px' width='40' height='40' viewBox='0 0 60 60'><text x='1.700' y='33.300' textLength='56.300' lengthAdjust='spacingAndGlyphs' font-family='Liberation Sans, sans-serif' font-size='35.800' fill='#232b38'>aws</text><g transform='translate(0 4.200)'><path d='M0 34.800C14 46 40 47.500 54.300 38.400' fill='none' stroke='#f09a28' stroke-width='3.300' stroke-linecap='round'/><path d='M49.500 35.600C53 34.300 57.500 33.800 59.600 34.300 60 37 58.500 41.500 56 45.300 57 41.500 57.800 38.500 57.300 36.600 55.500 35.800 52 36 49.500 35.600z' fill='#f09a28'/></g></svg>
<div class='btn' style='left:640px;width:420px'></div><svg class='a' style='left:662px;top:460px' width='40' height='40' viewBox='-7 -8.300 110 110'><defs><linearGradient id='aza' x1='.5' y1='0' x2='.3' y2='1'><stop offset='0' stop-color='#234a8c'/><stop offset='1' stop-color='#2b63b8'/></linearGradient><linearGradient id='azc' x1='.4' y1='0' x2='.6' y2='1'><stop offset='0' stop-color='#62c6ee'/><stop offset='1' stop-color='#4a90db'/></linearGradient></defs><path d='M33.338 6.544h26.038l-27.030 80.087a4.152 4.152 0 0 1-3.933 2.824H8.149a4.145 4.145 0 0 1-3.928-5.470L29.404 9.368a4.152 4.152 0 0 1 3.934-2.825z' fill='url(#aza)'/><path d='M71.175 60.261h-41.290a1.911 1.911 0 0 0-1.305 3.309l26.532 24.764a4.171 4.171 0 0 0 2.846 1.121h23.380z' fill='#3574d4'/><path d='M66.595 9.364a4.145 4.145 0 0 0-3.928-2.820H33.648a4.146 4.146 0 0 1 3.928 2.820l25.184 74.620a4.146 4.146 0 0 1-3.928 5.472h29.020a4.146 4.146 0 0 0 3.927-5.472z' fill='url(#azc)'/></svg>
<div class='btn' style='left:1100px;width:523px'></div><svg class='a' style='left:1122px;top:461px' width='40' height='40' viewBox='0 1.500 60 60' fill='none' stroke-width='7.400'><path d='M17.200 25.600A13.200 13.200 0 0 1 39.600 18.600' stroke='#e8563a'/><path d='M39.600 18.600A13.200 13.200 0 0 1 43.200 27.300 9 9 0 0 1 41 45.500H30' stroke='#4290e0'/><path d='M30 45.500H19A9 9 0 0 1 13 43.200' stroke='#5bb15d'/><path d='M13.600 43.800A9 9 0 0 1 19 27.500 9 9 0 0 1 26 30.800' stroke='#f7cf4a'/></svg>
<div class='btn' style='left:1663px;width:597px'></div><svg class='a' style='left:1685px;top:460px' width='40' height='40' viewBox='0 0 60 60'><path d='M30.00 4.90 50.95 14.99 56.13 37.66 41.63 55.85 18.37 55.85 3.87 37.66 9.05 14.99z' fill='#3f6fe0' stroke='#3f6fe0' stroke-width='6.500' stroke-linejoin='round'/><circle cx='30' cy='31.7' r='14.300' fill='none' stroke='#fff' stroke-width='3.600'/><path d='M30.00 29.20L30.00 10.20M31.95 30.14L46.81 18.29M32.44 32.26L50.96 36.48M31.08 33.95L39.33 51.07M28.92 33.95L20.67 51.07M27.56 32.26L9.04 36.48M28.05 30.14L13.19 18.29' stroke='#fff' stroke-width='3' stroke-linecap='round'/><circle cx='30' cy='31.7' r='3.600' fill='#fff'/><circle cx='30' cy='31.7' r='1.700' fill='#2f55b8'/></svg>
<div class='btn' style='left:2300px;width:514px'></div><svg class='a' style='left:2322px;top:461px' width='40' height='40' viewBox='0 0 40 40'><circle cx='20' cy='20' r='20' fill='#1f3d6d'/><path d='M10.400 13.800 14.500 20.800 18.800 13.100H24.800L17.600 26.900H11.400L8.600 21.600V16.200z' fill='#fff'/><path d='M26.400 17.900 29.700 14.200 31.400 18.900V21.600L28.700 26.900H22.300L24.400 23H22.900z' fill='#fff'/></svg>

<div id="hdr">
 <svg class="a" style="left:38px;top:45px" width="48" height="48" viewBox="0 0 48 48" fill="none" stroke="#fff" stroke-width="3"><rect x="3.500" y="3.500" width="41" height="41" rx="4.500"/><path d="M33.500 3.500v41"/><path d="M15.600 17.300v13.600l8.400-6.800z" fill="#fff" stroke="none"/></svg>
 <svg class='a' style='left:140px;top:10px' width='120' height='120' viewBox='0 0 120 120'><path d='M50.79 16.73Q54.70 14.50 58.61 16.73L90.09 34.67Q94.00 36.90 94.00 41.40L94.00 76.20Q94.00 80.70 90.09 82.93L58.61 100.87Q54.70 103.10 50.79 100.87L19.31 82.93Q15.40 80.70 15.40 76.20L15.40 41.40Q15.40 36.90 19.31 34.67z' fill='none' stroke='#fff' stroke-width='3'/><path d='M51.67 21.25Q54.70 19.50 57.73 21.25L86.27 37.75Q89.30 39.50 89.30 43.00L89.30 74.60Q89.30 78.10 86.27 79.85L57.73 96.35Q54.70 98.10 51.67 96.35L23.13 79.85Q20.10 78.10 20.10 74.60L20.10 43.00Q20.10 39.50 23.13 37.75z' fill='#fff' stroke='#fff' stroke-width='1.5'/><g fill='#121530'><rect x='26.200' y='49.300' width='7' height='19.600' rx='3.300'/><rect x='76.500' y='49.300' width='7.300' height='19.600' rx='3.300'/><ellipse cx='54.500' cy='58.400' rx='23.100' ry='24.200'/><circle cx='79.500' cy='40.500' r='1.800'/></g><path d='M79.500 40.500V51' stroke='#121530' stroke-width='1.800'/><ellipse cx='54.500' cy='58.400' rx='20.500' ry='21.500' fill='#fff'/><path d='M53 43.400C64 43 74 49.500 74.800 59 75.300 65 71.500 70 65.500 72.600 70 68.500 72.800 64 72.400 58.500 71.800 51 64 45.500 53 43.400z' fill='#121530'/><ellipse cx='51.300' cy='60.300' rx='16.500' ry='17.900' fill='#121530'/><g fill='none' stroke='#121530' stroke-width='2'><path d='M39 83.800Q54.600 88.600 70.200 83.800'/><path d='M40.700 81 36.200 89M68.600 81 73.400 89M54.700 86.300V99.500'/></g></svg>
 <svg class='a' style='left:2792px;top:29px' width='80' height='80' viewBox='0 0 80 80'><defs><clipPath id='ec'><circle cx='40' cy='40' r='40'/></clipPath><clipPath id='el'><circle cx='45' cy='40' r='36.500'/></clipPath><clipPath id='ew'><path d='M40 40V-5H90V90H88z'/></clipPath></defs><g clip-path='url(#ec)'><rect width='80' height='80' fill='#4394f0'/><path id='land' d='M30 2 40 0V6.500L36.500 8.700 32 6 28 8.500 28.500 13 32.500 16 30.500 19.500 25 23 23 25 17 26 16 30 17.500 33 21 36 26.500 36.500 28.500 39.500 34.500 41.500 36.500 44 42 46 42.800 49.500 40 54 35.500 57.500 34.500 61 32 65 31.500 71.500 28.500 73.500 25 71.500 23 57 21 53 15 49 13.500 43.500 14.500 39 10.500 35.500 8.500 30 4 23 10 10 22 3 27 8z' fill='#52b972'/><g clip-path='url(#el)'><rect width='80' height='80' fill='#4fa7f5'/><path d='M30 2 40 0V6.500L36.500 8.700 32 6 28 8.500 28.500 13 32.500 16 30.500 19.500 25 23 23 25 17 26 16 30 17.500 33 21 36 26.500 36.500 28.500 39.500 34.500 41.500 36.500 44 42 46 42.800 49.500 40 54 35.500 57.500 34.500 61 32 65 31.500 71.500 28.500 73.500 25 71.500 23 57 21 53 15 49 13.500 43.500 14.500 39 10.500 35.500 8.500 30 4 23 10 10 22 3 27 8z' fill='#6cc893'/></g><g clip-path='url(#ew)'><circle cx='40' cy='40' r='40' fill='#b58566'/><circle cx='40' cy='40' r='31' fill='#fbe069'/><circle cx='40' cy='40' r='21.600' fill='#f0a860'/><circle cx='40' cy='40' r='13' fill='#ee6868'/><path d='M40 -5H46.800V46.800L40 40z' fill='#c8501e' opacity='.22'/></g></g></svg>
</div>
<div id="side"><div class="bt"></div>
 <div class="a" style="left:22px;top:30px;width:80px;height:80px;border-radius:50%;background:#1a2033"></div>
 <div class="dv" style="top:138px"></div><div class="dv" style="top:802px"></div><div class="dv" style="top:1074px"></div>
<svg class='a' style='left:40px;top:172px' width='40' height='40' viewBox='0 0 24 24' fill='#a0a4c4'><path d='M11 21H5c-1.1 0-2-.9-2-2V5c0-1.1.9-2 2-2h6v18zm2 0h6c1.1 0 2-.9 2-2v-7h-8v9zm8-11V5c0-1.1-.9-2-2-2h-6v7h8z'/></svg>
<svg class='a' style='left:40px;top:240px' width='40' height='40' viewBox='0 0 24 24' fill='#a0a4c4'><path d='M9.17 6l2 2H20v10H4V6h5.17M10 4H4c-1.1 0-1.99.9-1.99 2L2 18c0 1.1.9 2 2 2h16c1.1 0 2-.9 2-2V8c0-1.1-.9-2-2-2h-8l-2-2z'/></svg>
<svg class='a' style='left:40px;top:308px' width='40' height='40' viewBox='0 0 24 24'><path d='M12 1.800 21.070 6.900V17L12 21.700 2.930 17V6.900z' fill='#a0a4c4'/><g stroke='#131827' fill='none'><path d='M12 11.900 2 6.950M12 11.900 22 6.950' stroke-width='2.200'/><path d='M12 12V22.500' stroke-width='2.150'/></g><circle cx='12' cy='11.900' r='3.700' fill='#131827'/><circle cx='12' cy='11.900' r='1.960' fill='#a0a4c4'/></svg>
<div class='a' style='left:24px;top:366px;width:72px;height:60px;border-radius:13px;background:#4a5296'></div>
<svg class='a' style='left:40px;top:376px' width='40' height='40' viewBox='0 0 24 24' fill='#ffffff'><path d='M18 8h-1V6c0-2.76-2.24-5-5-5S7 3.24 7 6v2H6c-1.1 0-2 .9-2 2v10c0 1.1.9 2 2 2h12c1.1 0 2-.9 2-2V10c0-1.1-.9-2-2-2zm-6 9c-1.1 0-2-.9-2-2s.9-2 2-2 2 .9 2 2-.9 2-2 2zm3.1-9H8.9V6c0-1.71 1.39-3.1 3.1-3.1 1.71 0 3.1 1.39 3.1 3.1v2z'/></svg>
<svg class='a' style='left:40px;top:444px' width='40' height='40' viewBox='0 0 24 24' fill='#a0a4c4'><path d='M14 12l-2 2-2-2 2-2 2 2zm-2-6l2.12 2.12 2.5-2.5L12 1 7.38 5.62l2.5 2.5L12 6zm-6 6l2.12-2.12-2.5-2.5L1 12l4.62 4.62 2.5-2.5L6 12zm12 0l-2.12 2.12 2.5 2.5L23 12l-4.62-4.62-2.5 2.5L18 12zm-6 6l-2.12-2.12-2.5 2.5L12 23l4.62-4.62-2.5-2.5L12 18z'/></svg>
<svg class='a' style='left:40px;top:512px' width='40' height='40' viewBox='0 0 24 24' fill='#a0a4c4'><path d='M12 12.75c1.63 0 3.07.39 4.24.9 1.08.48 1.76 1.56 1.76 2.73V18H6v-1.61c0-1.18.68-2.26 1.76-2.73 1.17-.52 2.61-.91 4.24-.91zM4 13c1.1 0 2-.9 2-2s-.9-2-2-2-2 .9-2 2 .9 2 2 2zm1.13 1.1c-.37-.06-.74-.1-1.13-.1-.99 0-1.93.21-2.78.58C.48 14.9 0 15.62 0 16.43V18h4.5v-1.61c0-.83.23-1.61.63-2.29zM20 13c1.1 0 2-.9 2-2s-.9-2-2-2-2 .9-2 2 .9 2 2 2zm4 3.43c0-.81-.48-1.53-1.22-1.85-.85-.37-1.79-.58-2.78-.58-.39 0-.76.04-1.13.1.4.68.63 1.46.63 2.29V18H24v-1.57zM12 6c1.66 0 3 1.34 3 3s-1.34 3-3 3-3-1.34-3-3 1.34-3 3-3z'/></svg>
<svg class='a' style='left:40px;top:580px' width='40' height='40' viewBox='0 0 24 24' fill='#a0a4c4'><path d='M4 7v2c0 .55-.45 1-1 1H2v4h1c.55 0 1 .45 1 1v2c0 1.65 1.35 3 3 3h3v-2H7c-.55 0-1-.45-1-1v-2c0-1.3-.84-2.42-2-2.83v-.34C5.16 11.42 6 10.3 6 9V7c0-.55.45-1 1-1h3V4H7C5.35 4 4 5.35 4 7zm17 3c-.55 0-1-.45-1-1V7c0-1.65-1.35-3-3-3h-3v2h3c.55 0 1 .45 1 1v2c0 1.3.84 2.42 2 2.83v.34c-1.16.41-2 1.52-2 2.83v2c0 .55-.45 1-1 1h-3v2h3c1.65 0 3-1.35 3-3v-2c0-.55.45-1 1-1h1v-4h-1z'/></svg>
<svg class='a' style='left:40px;top:648px' width='40' height='40' viewBox='0 0 24 24' fill='#a0a4c4'><path d='M23 8c0 1.1-.9 2-2 2-.18 0-.35-.02-.51-.07l-3.56 3.55c.05.16.07.34.07.52 0 1.1-.9 2-2 2s-2-.9-2-2c0-.18.02-.36.07-.52l-2.55-2.55c-.16.05-.34.07-.52.07s-.36-.02-.52-.07l-4.55 4.56c.05.16.07.33.07.51 0 1.1-.9 2-2 2s-2-.9-2-2 .9-2 2-2c.18 0 .35.02.51.07l4.56-4.55C8.02 9.36 8 9.18 8 9c0-1.1.9-2 2-2s2 .9 2 2c0 .18-.02.36-.07.52l2.55 2.55c.16-.05.34-.07.52-.07s.36.02.52.07l3.55-3.56C19.02 8.35 19 8.18 19 8c0-1.1.9-2 2-2s2 .9 2 2z'/></svg>
<svg class='a' style='left:40px;top:716px' width='40' height='40' viewBox='0 0 24 24' fill='#a0a4c4'><path d='M20 4H4c-1.11 0-1.99.89-1.99 2L2 18c0 1.11.89 2 2 2h16c1.11 0 2-.89 2-2V6c0-1.11-.89-2-2-2zm0 14H4v-6h16v6zm0-10H4V6h16v2z'/></svg>
<svg class='a' style='left:40px;top:852px' width='40' height='40' viewBox='0 0 24 24' fill='#a0a4c4'><path d='M5 13.18v4L12 21l7-3.82v-4L12 17l-7-3.82zM12 3L1 9l11 6 9-4.91V17h2V9L12 3z'/></svg>
<svg class='a' style='left:40px;top:920px' width='40' height='40' viewBox='0 0 24 24' fill='#a0a4c4'><path d='M21 5c-1.11-.35-2.33-.5-3.5-.5-1.95 0-4.05.4-5.5 1.5-1.45-1.1-3.55-1.5-5.5-1.5S2.45 4.9 1 6v14.65c0 .25.25.5.5.5.1 0 .15-.05.25-.05C3.1 20.45 5.05 20 6.5 20c1.95 0 4.05.4 5.5 1.5 1.35-.85 3.8-1.5 5.5-1.5 1.65 0 3.35.3 4.75 1.05.1.05.15.05.25.05.25 0 .5-.25.5-.5V6c-.6-.45-1.25-.75-2-1zm0 13.5c-1.1-.35-2.3-.5-3.5-.5-1.7 0-4.15.65-5.5 1.5V8c1.35-.85 3.8-1.5 5.5-1.5 1.2 0 2.4.15 3.5.5v11.5zM17.5 10.5c.88 0 1.73.09 2.5.26V9.24c-.79-.15-1.64-.24-2.5-.24-1.7 0-3.24.29-4.5.83v1.66c1.13-.64 2.7-.99 4.5-.99zM13 12.49v1.66c1.13-.64 2.7-.99 4.5-.99.88 0 1.73.09 2.5.26V11.9c-.79-.15-1.64-.24-2.5-.24-1.7 0-3.24.3-4.5.83zm4.500 1.84c-1.7 0-3.24.29-4.5.83v1.66c1.13-.64 2.7-.99 4.5-.99.88 0 1.73.09 2.5.26v-1.52c-.79-.16-1.64-.24-2.5-.24z'/></svg>
<svg class='a' style='left:40px;top:988px' width='40' height='40' viewBox='0 0 24 24' fill='#a0a4c4'><path d='M1.800 8C7 8.200 11.800 11.500 12 17.200' fill='none' stroke='#a0a4c4' stroke-width='2'/><path d='M12 17.200C12 13.500 14 10.500 17.500 8.400' fill='none' stroke='#a0a4c4' stroke-width='2'/><path d='M14.100 4.850 21.100 4.750 21 12z'/><rect x='9' y='17' width='6' height='2.250'/></svg>
<svg class='a' style='left:40px;top:1092px' width='40' height='40' viewBox='0 0 24 24' fill='#a0a4c4'><path d='M17 7l-1.41 1.41L18.17 11H8v2h10.17l-2.58 2.58L17 17l5-5zM4 5h8V3H4c-1.1 0-2 .9-2 2v14c0 1.1.9 2 2 2h8v-2H4V5z'/></svg>
</div>
<div id="strip"></div>
<div id="tx"><span class='t md' style='left:243.1px;top:44.2px;font-size:46px;line-height:46px;font-weight:700;font-style:normal;color:#ffffff;letter-spacing:-0.912px;'>massdriver</span>
<span class='t ' style='left:2424.6px;top:53.6px;font-size:31px;line-height:31px;font-weight:400;font-style:normal;color:#a3a7c6;letter-spacing:0.619px;'>cory@massdriver.cloud</span>
<span class='t sx' style='left:52.3px;top:194.3px;font-size:29px;line-height:29px;font-weight:700;font-style:normal;color:#ffffff;letter-spacing:-0.959px;'>S</span>
<span class='t ' style='left:187.0px;top:179.4px;font-size:58px;line-height:58px;font-weight:400;font-style:normal;color:#1f2a4d;letter-spacing:1.065px;'><span style='letter-spacing:0.967px'>Connect</span><span style='letter-spacing:2.969px'> </span><span style='letter-spacing:0.968px'>your</span><span style='letter-spacing:0.865px'> </span><span style='letter-spacing:1.149px'>cloud</span><span style='letter-spacing:1.778px'> </span><span style='letter-spacing:1.155px'>accounts</span></span>
<span class='t ' style='left:188.9px;top:259.9px;font-size:29px;line-height:29px;font-weight:400;font-style:italic;color:#5b6685;letter-spacing:0.414px;'><span style='letter-spacing:0.243px'>Empower</span><span style='letter-spacing:-0.060px'> </span><span style='letter-spacing:0.795px'>your</span><span style='letter-spacing:-0.271px'> </span><span style='letter-spacing:-0.022px'>teams.</span><span style='letter-spacing:1.239px'> </span><span style='letter-spacing:0.382px'>Govern</span><span style='letter-spacing:-1.038px'> </span><span style='letter-spacing:0.830px'>with</span><span style='letter-spacing:0.653px'> </span><span style='letter-spacing:0.661px'>confidence.</span></span>
<span class='t ' style='left:815.3px;top:259.9px;font-size:29px;line-height:29px;font-weight:400;font-style:normal;color:#5b6685;letter-spacing:0.467px;'><span style='letter-spacing:0.508px'>Connecting</span><span style='letter-spacing:1.027px'> </span><span style='letter-spacing:0.570px'>your</span><span style='letter-spacing:0.220px'> </span><span style='letter-spacing:0.734px'>cloud</span><span style='letter-spacing:-0.503px'> </span><span style='letter-spacing:0.653px'>accounts</span><span style='letter-spacing:0.226px'> </span><span style='letter-spacing:0.830px'>with</span><span style='letter-spacing:0.977px'> </span><span style='letter-spacing:0.509px'>Massdriver</span><span style='letter-spacing:-0.630px'> </span><span style='letter-spacing:-0.027px'>is</span><span style='letter-spacing:0.513px'> </span><span style='letter-spacing:0.524px'>the</span><span style='letter-spacing:-0.166px'> </span><span style='letter-spacing:1.116px'>first</span><span style='letter-spacing:-0.487px'> </span><span style='letter-spacing:0.468px'>step</span><span style='letter-spacing:-0.718px'> </span><span style='letter-spacing:0.556px'>to</span><span style='letter-spacing:0.996px'> </span><span style='letter-spacing:0.474px'>scaling</span><span style='letter-spacing:0.810px'> </span><span style='letter-spacing:0.618px'>Infrastructure</span><span style='letter-spacing:-0.432px'> </span><span style='letter-spacing:-0.320px'>as</span><span style='letter-spacing:0.382px'> </span><span style='letter-spacing:0.168px'>Code</span><span style='letter-spacing:0.552px'> </span><span style='letter-spacing:0.396px'>across</span><span style='letter-spacing:0.612px'> </span><span style='letter-spacing:0.545px'>your</span><span style='letter-spacing:-0.149px'> </span><span style='letter-spacing:0.372px'>organization.</span><span style='letter-spacing:0.377px'> </span><span style='letter-spacing:-0.233px'>Enable</span><span style='letter-spacing:0.297px'> </span><span style='letter-spacing:0.403px'>developer</span><span style='letter-spacing:1.180px'> </span><span style='letter-spacing:0.887px'>self-service</span></span>
<span class='t ' style='left:188.0px;top:308.9px;font-size:29px;line-height:29px;font-weight:400;font-style:normal;color:#5b6685;letter-spacing:0.367px;'><span style='letter-spacing:0.561px'>while</span><span style='letter-spacing:0.712px'> </span><span style='letter-spacing:-0.061px'>DevOps</span><span style='letter-spacing:0.275px'> </span><span style='letter-spacing:0.214px'>gains</span><span style='letter-spacing:0.165px'> </span><span style='letter-spacing:0.270px'>essential</span><span style='letter-spacing:0.342px'> </span><span style='letter-spacing:0.679px'>visibility</span><span style='letter-spacing:-0.184px'> </span><span style='letter-spacing:0.036px'>and</span><span style='letter-spacing:0.444px'> </span><span style='letter-spacing:0.649px'>control.</span></span>
<span class='t ' style='left:271.5px;top:466.4px;font-size:29px;line-height:29px;font-weight:400;font-style:normal;color:#5869f0;letter-spacing:0.236px;'><span style='letter-spacing:0.292px'>Create</span><span style='letter-spacing:-0.788px'> </span><span style='letter-spacing:-0.661px'>AWS</span><span style='letter-spacing:0.671px'> </span><span style='letter-spacing:0.605px'>credential</span></span>
<span class='t ' style='left:717.4px;top:466.4px;font-size:29px;line-height:29px;font-weight:400;font-style:normal;color:#5869f0;letter-spacing:0.370px;'><span style='letter-spacing:0.276px'>Create</span><span style='letter-spacing:0.146px'> </span><span style='letter-spacing:0.207px'>Azure</span><span style='letter-spacing:0.237px'> </span><span style='letter-spacing:0.605px'>credential</span></span>
<span class='t ' style='left:1177.5px;top:466.4px;font-size:29px;line-height:29px;font-weight:400;font-style:normal;color:#5869f0;letter-spacing:0.264px;'><span style='letter-spacing:0.276px'>Create</span><span style='letter-spacing:0.308px'> </span><span style='letter-spacing:0.131px'>Google</span><span style='letter-spacing:0.114px'> </span><span style='letter-spacing:0.484px'>Cloud</span><span style='letter-spacing:-0.057px'> </span><span style='letter-spacing:0.495px'>credential</span></span>
<span class='t ' style='left:1741.0px;top:466.4px;font-size:29px;line-height:29px;font-weight:400;font-style:normal;color:#5869f0;letter-spacing:0.290px;'><span style='letter-spacing:0.292px'>Create</span><span style='letter-spacing:0.356px'> </span><span style='letter-spacing:0.227px'>Kubernetes</span><span style='letter-spacing:0.070px'> </span><span style='letter-spacing:0.492px'>Cluster</span><span style='letter-spacing:-0.066px'> </span><span style='letter-spacing:0.485px'>credential</span></span>
<span class='t ' style='left:2377.7px;top:466.4px;font-size:29px;line-height:29px;font-weight:400;font-style:normal;color:#5869f0;letter-spacing:0.026px;'><span style='letter-spacing:0.176px'>Create</span><span style='letter-spacing:-0.298px'> </span><span style='letter-spacing:-0.881px'>OVH</span><span style='letter-spacing:0.616px'> </span><span style='letter-spacing:0.076px'>OAuth2</span><span style='letter-spacing:0.285px'> </span><span style='letter-spacing:0.371px'>Credential</span></span>
<span class='t ' style='left:279.0px;top:591.0px;font-size:29px;line-height:29px;font-weight:400;font-style:normal;color:#a2a8b9;letter-spacing:-0.147px;'>Search...</span>
<span class='t ' style='left:215.6px;top:701.0px;font-size:29px;line-height:29px;font-weight:400;font-style:normal;color:#1f2a4d;letter-spacing:0.942px;'>Name</span>
<span class='t ' style='left:1151.3px;top:701.0px;font-size:29px;line-height:29px;font-weight:400;font-style:normal;color:#1f2a4d;letter-spacing:1.049px;'>Cost Tracking</span>
<span class='t ' style='left:1619.7px;top:701.0px;font-size:29px;line-height:29px;font-weight:400;font-style:normal;color:#1f2a4d;letter-spacing:1.470px;'>Type</span>
<span class='t ' style='left:2087.4px;top:701.0px;font-size:29px;line-height:29px;font-weight:400;font-style:normal;color:#1f2a4d;letter-spacing:0.769px;'>Created</span>
<span class='t ' style='left:2555.5px;top:701.0px;font-size:29px;line-height:29px;font-weight:400;font-style:normal;color:#1f2a4d;letter-spacing:1.163px;'>Actions</span>
<span class='t ' style='left:225.2px;top:808.5px;font-size:29px;line-height:29px;font-weight:400;font-style:normal;color:#1f2a4d;letter-spacing:0.397px;text-decoration:underline;text-decoration-thickness:2px;text-underline-offset:3px;'>Sandbox</span>
<span class='t ' style='left:2087.2px;top:808.5px;font-size:29px;line-height:29px;font-weight:400;font-style:normal;color:#1f2a4d;letter-spacing:1.023px;'>3 months ago</span>
<span class='t ' style='left:225.2px;top:912.5px;font-size:29px;line-height:29px;font-weight:400;font-style:normal;color:#1f2a4d;letter-spacing:0.884px;text-decoration:underline;text-decoration-thickness:2px;text-underline-offset:3px;'>md-provisioner</span>
<span class='t ' style='left:2087.2px;top:912.5px;font-size:29px;line-height:29px;font-weight:400;font-style:normal;color:#1f2a4d;letter-spacing:0.437px;'>13 days ago</span>
<span class='t ' style='left:225.2px;top:1016.5px;font-size:29px;line-height:29px;font-weight:400;font-style:normal;color:#1f2a4d;letter-spacing:0.707px;text-decoration:underline;text-decoration-thickness:2px;text-underline-offset:3px;'>Sponsorship-New-Onboarding</span>
<span class='t ' style='left:2087.2px;top:1016.5px;font-size:29px;line-height:29px;font-weight:400;font-style:normal;color:#1f2a4d;letter-spacing:0.437px;'>16 days ago</span>
<span class='t ' style='left:225.2px;top:1120.5px;font-size:29px;line-height:29px;font-weight:400;font-style:normal;color:#1f2a4d;letter-spacing:0.557px;text-decoration:underline;text-decoration-thickness:2px;text-underline-offset:3px;'>Sponsorship</span>
<span class='t ' style='left:2087.2px;top:1120.5px;font-size:29px;line-height:29px;font-weight:400;font-style:normal;color:#1f2a4d;letter-spacing:1.023px;'>3 months ago</span>
<span class='t ' style='left:225.2px;top:1224.5px;font-size:29px;line-height:29px;font-weight:400;font-style:normal;color:#1f2a4d;letter-spacing:0.397px;text-decoration:underline;text-decoration-thickness:2px;text-underline-offset:3px;'>Sandbox</span>
<span class='t ' style='left:2087.2px;top:1224.5px;font-size:29px;line-height:29px;font-weight:400;font-style:normal;color:#1f2a4d;letter-spacing:1.114px;'>4 months ago</span>
<span class='t ' style='left:225.2px;top:1328.5px;font-size:29px;line-height:29px;font-weight:400;font-style:normal;color:#1f2a4d;letter-spacing:0.397px;text-decoration:underline;text-decoration-thickness:2px;text-underline-offset:3px;'>Sandbox</span>
<span class='t ' style='left:2087.2px;top:1328.5px;font-size:29px;line-height:29px;font-weight:400;font-style:normal;color:#1f2a4d;letter-spacing:0.749px;'>a year ago</span>
<span class='t ' style='left:226.3px;top:1432.5px;font-size:29px;line-height:29px;font-weight:400;font-style:normal;color:#1f2a4d;letter-spacing:0.523px;text-decoration:underline;text-decoration-thickness:2px;text-underline-offset:3px;'><span style='letter-spacing:-0.677px'>AKS</span><span style='letter-spacing:-0.445px'> </span><span style='letter-spacing:0.434px'>Cluster</span><span style='letter-spacing:-0.638px'> </span><span style='letter-spacing:0.283px'>Credentials</span><span style='letter-spacing:0.186px'> </span><span style='letter-spacing:0.980px'>selfhst-bare-k8s-pksq</span><span style='letter-spacing:0.444px'> </span><span style='letter-spacing:0.592px'>[eastus]</span></span>
<span class='t ' style='left:2087.2px;top:1432.5px;font-size:29px;line-height:29px;font-weight:400;font-style:normal;color:#1f2a4d;letter-spacing:0.981px;'>6 hours ago</span>
<span class='t ' style='left:226.3px;top:1536.5px;font-size:29px;line-height:29px;font-weight:400;font-style:normal;color:#1f2a4d;letter-spacing:0.525px;text-decoration:underline;text-decoration-thickness:2px;text-underline-offset:3px;'><span style='letter-spacing:-0.677px'>AKS</span><span style='letter-spacing:-0.445px'> </span><span style='letter-spacing:0.434px'>Cluster</span><span style='letter-spacing:-0.638px'> </span><span style='letter-spacing:0.283px'>Credentials</span><span style='letter-spacing:0.203px'> </span><span style='letter-spacing:1.013px'>selfhst-test-k8s-pksq</span><span style='letter-spacing:1.052px'> </span><span style='letter-spacing:0.442px'>[eastus]</span></span>
<span class='t ' style='left:2087.2px;top:1536.5px;font-size:29px;line-height:29px;font-weight:400;font-style:normal;color:#1f2a4d;letter-spacing:0.977px;'>6 days ago</span>
<span class='t ' style='left:225.2px;top:1640.5px;font-size:29px;line-height:29px;font-weight:400;font-style:normal;color:#1f2a4d;letter-spacing:0.502px;text-decoration:underline;text-decoration-thickness:2px;text-underline-offset:3px;'><span style='letter-spacing:-1.544px'>EKS</span><span style='letter-spacing:0.560px'> </span><span style='letter-spacing:0.434px'>Cluster</span><span style='letter-spacing:-0.543px'> </span><span style='letter-spacing:0.274px'>Credentials</span><span style='letter-spacing:0.207px'> </span><span style='letter-spacing:1.012px'>chat-staging-compute-zch9</span><span style='letter-spacing:0.277px'> </span><span style='letter-spacing:0.491px'>[us-east-1]</span></span>
<span class='t ' style='left:2087.2px;top:1640.5px;font-size:29px;line-height:29px;font-weight:400;font-style:normal;color:#1f2a4d;letter-spacing:1.023px;'>2 months ago</span>
<span class='t ' style='left:225.2px;top:1744.5px;font-size:29px;line-height:29px;font-weight:400;font-style:normal;color:#1f2a4d;letter-spacing:0.566px;text-decoration:underline;text-decoration-thickness:2px;text-underline-offset:3px;'><span style='letter-spacing:-1.534px'>EKS</span><span style='letter-spacing:0.531px'> </span><span style='letter-spacing:0.434px'>Cluster</span><span style='letter-spacing:-0.543px'> </span><span style='letter-spacing:0.274px'>Credentials</span><span style='letter-spacing:0.153px'> </span><span style='letter-spacing:0.906px'>demo-staging-awsekscluste-gtxr</span><span style='letter-spacing:0.955px'> </span><span style='letter-spacing:1.266px'>[us-w</span></span>
<span class='t ' style='left:1074.5px;top:1744.5px;font-size:29px;line-height:29px;font-weight:400;font-style:normal;color:#1f2a4d;letter-spacing:-0.543px;'>...</span>
<span class='t ' style='left:2087.2px;top:1744.5px;font-size:29px;line-height:29px;font-weight:400;font-style:normal;color:#1f2a4d;letter-spacing:0.749px;'>a year ago</span></div>
</body></html>
